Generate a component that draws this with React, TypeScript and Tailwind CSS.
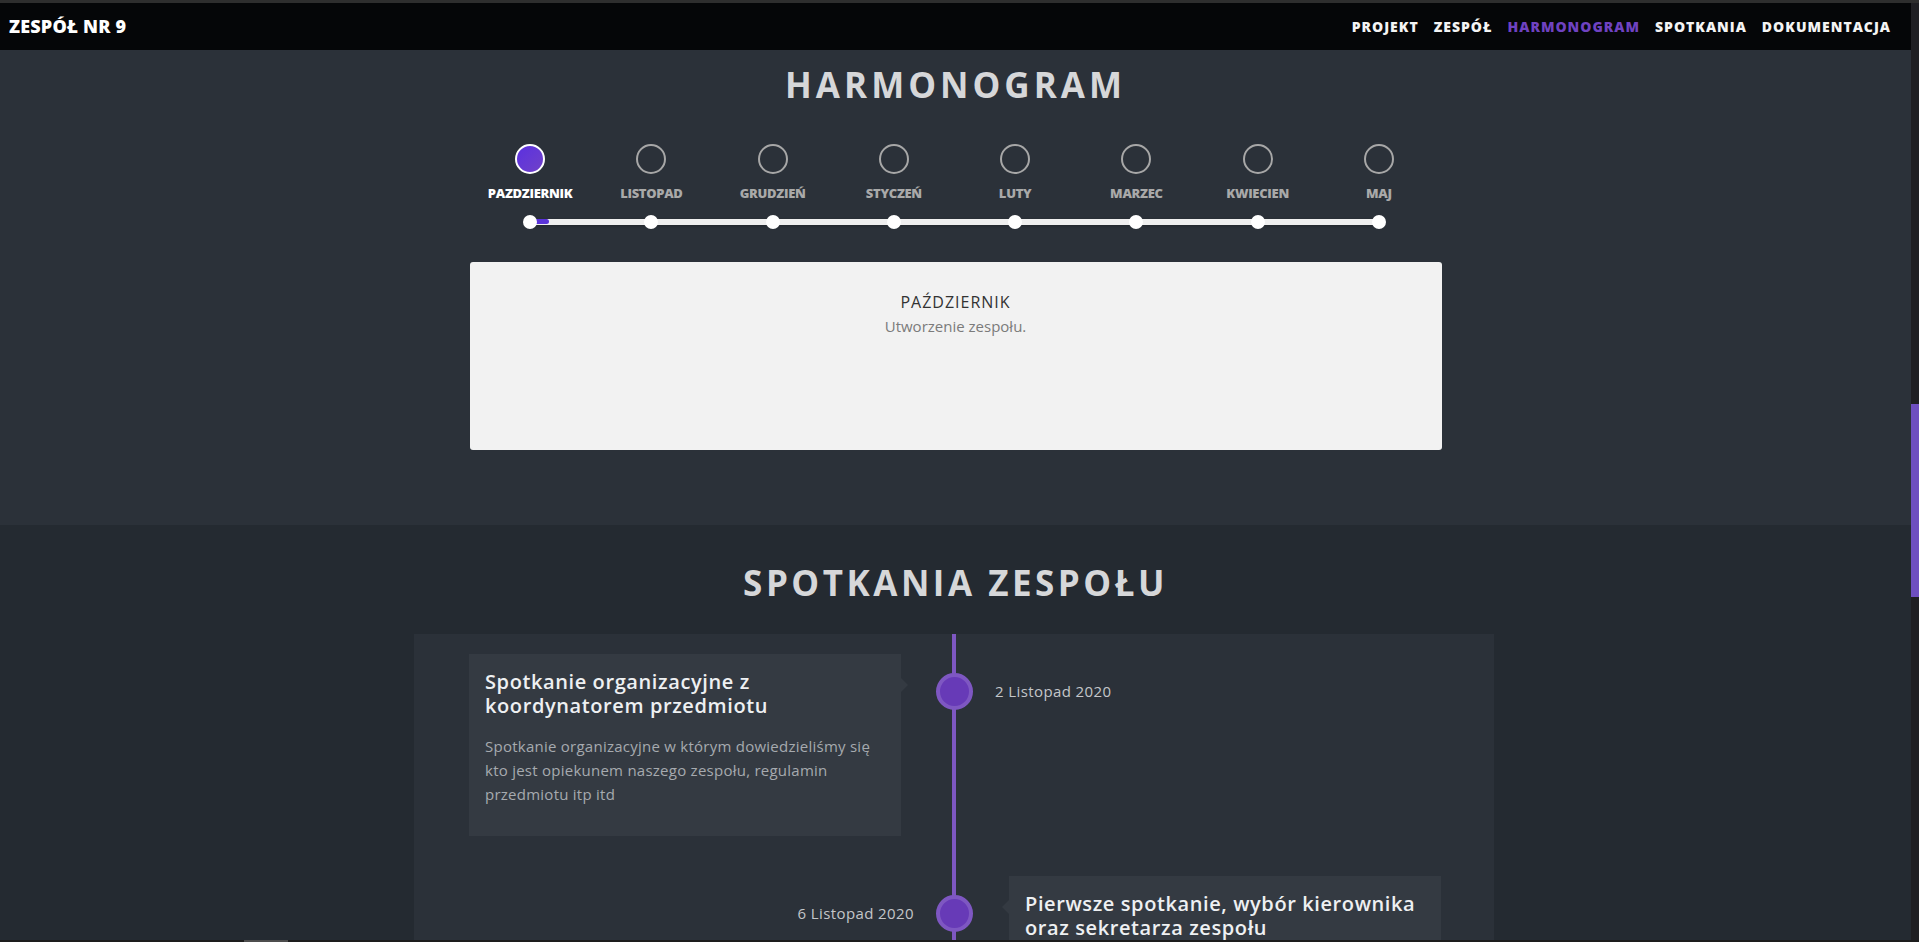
import React from "react";

const months = [
  "PAZDZIERNIK",
  "LISTOPAD",
  "GRUDZIEŃ",
  "STYCZEŃ",
  "LUTY",
  "MARZEC",
  "KWIECIEN",
  "MAJ",
];

const navLinks = ["PROJEKT", "ZESPÓŁ", "HARMONOGRAM", "SPOTKANIA", "DOKUMENTACJA"];

const font = { fontFamily: '"Open Sans", "Noto Sans", sans-serif' };

const Navbar = () => (
  <nav className="h-[47px] shrink-0 bg-[#050608] flex items-center justify-between pl-[9px] pr-[20px]">
    <div className="text-[18px] font-extrabold text-white tracking-[0.2px]">ZESPÓŁ NR 9</div>
    <ul className="flex items-center gap-[15px]">
      {navLinks.map((l) => (
        <li
          key={l}
          className={
            "text-[14px] font-extrabold tracking-[1px] " +
            (l === "HARMONOGRAM" ? "text-[#6f42c1]" : "text-[#f4f4f4]")
          }
        >
          {l}
        </li>
      ))}
    </ul>
  </nav>
);

const Harmonogram = () => (
  <section className="bg-[#2b3139] flex flex-col items-center pb-[75px] shrink-0">
    <h2 className="mt-[14px] text-[35px] leading-[42px] font-bold tracking-[4px] text-[#d6d7d9]">
      HARMONOGRAM
    </h2>

    <div className="w-[970px] mt-[38px] mr-[2px]">
      <div className="grid grid-cols-8">
        {months.map((m, i) => (
          <div key={m} className="flex flex-col items-center">
            {i === 0 ? (
              <div className="w-[30px] h-[30px] rounded-full border-2 border-white bg-gradient-to-br from-[#5b2fe0] to-[#7040c8]" />
            ) : (
              <div className="w-[30px] h-[30px] rounded-full border-2 border-[#a7a7a7]" />
            )}
            <div
              className={
                "mt-[9px] h-[20px] leading-[20px] text-[13px] font-extrabold tracking-[-0.3px] " +
                (i === 0 ? "text-white" : "text-[#a9a9a9]")
              }
            >
              {m}
            </div>
          </div>
        ))}
      </div>

      <div className="mx-[60.6px] mt-[15.5px] h-[6px] bg-[#efefef] rounded-full shadow-[0_1px_3px_rgba(0,0,0,0.25)]">
        <div className="-mx-[7px] h-full flex items-center justify-between">
          {months.map((m, i) => (
            <div key={m} className="relative shrink-0 w-[14px] h-[14px]">
              {i === 0 && (
                <div className="absolute left-[8px] top-[4.5px] w-[18px] h-[5px] rounded-full bg-[#5a33d8]" />
              )}
              <div className="relative w-[14px] h-[14px] rounded-full bg-white" />
            </div>
          ))}
        </div>
      </div>
    </div>

    <div className="mt-[37.5px] w-[972px] h-[188px] bg-[#f2f2f2] rounded-[3px] flex flex-col items-center pt-[28px]">
      <div className="text-[16px] leading-[24px] font-medium tracking-[1px] text-[#333333]">PAŹDZIERNIK</div>
      <div className="text-[15px] leading-[24px] text-[#7b7b7b]">Utworzenie zespołu.</div>
    </div>
  </section>
);

type Meeting = {
  title: string;
  desc?: string;
  date: string;
  side: "left" | "right";
};

const meetings: Meeting[] = [
  {
    title: "Spotkanie organizacyjne z koordynatorem przedmiotu",
    desc: "Spotkanie organizacyjne w którym dowiedzieliśmy się kto jest opiekunem naszego zespołu, regulamin przedmiotu itp itd",
    date: "2 Listopad 2020",
    side: "left",
  },
  {
    title: "Pierwsze spotkanie, wybór kierownika oraz sekretarza zespołu",
    desc: "Wybraliśmy kierownika oraz sekretarza zespołu, ustaliliśmy temat projektu.",
    date: "6 Listopad 2020",
    side: "right",
  },
];

const MeetingCard = ({ m }: { m: Meeting }) => (
  <div className="relative w-[432px] bg-[#343a42] pt-[16px] pb-[30px] px-[16px]">
    {m.side === "left" ? (
      <div className="absolute right-[-7px] top-[24px] w-0 h-0 border-y-[7px] border-y-transparent border-l-[7px] border-l-[#343a42]" />
    ) : (
      <div className="absolute left-[-7px] top-[24px] w-0 h-0 border-y-[7px] border-y-transparent border-r-[7px] border-r-[#343a42]" />
    )}
    <h3 className="text-[20px] leading-[24px] font-semibold text-[#eef0f2] tracking-[0.6px]">{m.title}</h3>
    {m.desc && (
      <p className="mt-[16px] text-[15px] leading-[24px] text-[#a6aaaf] tracking-[0.25px]">{m.desc}</p>
    )}
  </div>
);

const DateLabel = ({ text }: { text: string }) => (
  <div className="mt-[19px] h-[37px] flex items-center text-[15px] text-[#c4c6c9] tracking-[0.4px]">
    {text}
  </div>
);

const Spotkania = () => (
  <section className="bg-[#242a31] flex-1 flex flex-col items-center">
    <h2 className="mt-[37px] text-[35px] leading-[42px] font-bold tracking-[3.5px] text-[#d6d7d9]">
      SPOTKANIA ZESPOŁU
    </h2>
    <div className="mt-[30px] mr-[3px] w-[1080px] bg-[#2b3139] flex-1">
      {meetings.map((m) => (
        <div key={m.title} className="grid grid-cols-[1fr_4px_1fr]">
          {m.side === "left" ? (
            <div className="flex justify-end pt-[20px] pb-[20px] pr-[51px]">
              <MeetingCard m={m} />
            </div>
          ) : (
            <div className="flex justify-end pt-[20px] pb-[20px] pr-[38px]">
              <DateLabel text={m.date} />
            </div>
          )}
          <div className="bg-[#7e57c2] flex justify-center">
            <div className="shrink-0 mt-[39px] w-[37px] h-[37px] rounded-full bg-[#673ab7] border-[4px] border-[#7e57c2]" />
          </div>
          {m.side === "right" ? (
            <div className="flex justify-start pt-[20px] pb-[20px] pl-[53px]">
              <MeetingCard m={m} />
            </div>
          ) : (
            <div className="flex justify-start pt-[20px] pb-[20px] pl-[39px]">
              <DateLabel text={m.date} />
            </div>
          )}
        </div>
      ))}
    </div>
  </section>
);

const App = () => {
  return (
    <div className="w-full h-[942px] overflow-hidden flex flex-col bg-[#242a31]" style={font}>
      <div className="h-[3px] shrink-0 bg-[#2e2e2e]" />
      <div className="flex flex-1 min-h-0">
        <div className="flex-1 min-w-0 flex flex-col overflow-hidden">
          <Navbar />
          <Harmonogram />
          <Spotkania />
        </div>
        <div className="w-[8px] shrink-0 bg-[#1f1f23] flex flex-col">
          <div className="h-[401px]" />
          <div className="h-[193px] bg-[#6e4fc0]" />
        </div>
      </div>
      <div className="h-[2px] shrink-0 bg-[#1d1d1d] flex">
        <div className="w-[244px]" />
        <div className="w-[44px] bg-[#4d4d4d]" />
      </div>
    </div>
  );
};

export default App;
